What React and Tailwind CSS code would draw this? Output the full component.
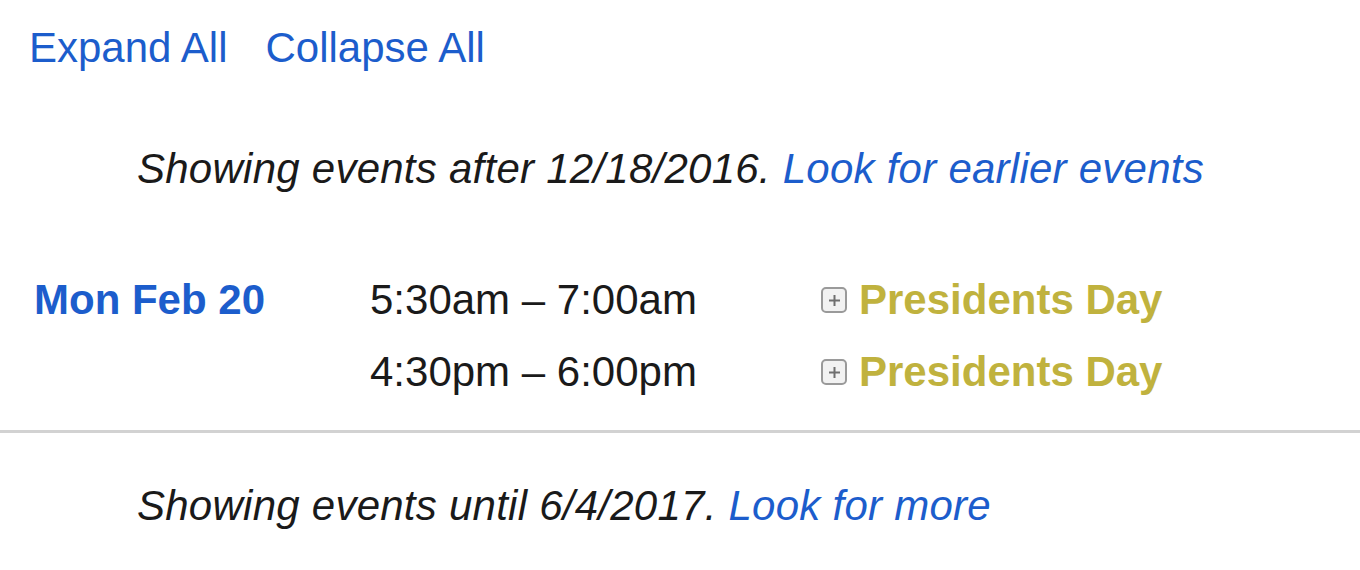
export default function App() {
  const events = [
    { time: '5:30am – 7:00am', title: 'Presidents Day' },
    { time: '4:30pm – 6:00pm', title: 'Presidents Day' },
  ];

  return (
    <div className="w-[1360px] h-[570px] bg-white overflow-hidden text-[42px] leading-[48px] text-[#1a1a1a]" style={{ fontFamily: '"Liberation Sans", Arial, sans-serif' }}>
      <div className="pl-[29px] pt-[24px] flex gap-[38px] text-[#1c5dcc]">
        <a href="#">Expand All</a>
        <a href="#">Collapse All</a>
      </div>

      <div className="pl-[137px] pt-[73px] italic tracking-[0.25px]">
        Showing events after 12/18/2016. <a href="#" className="text-[#1c5dcc]">Look for earlier events</a>
      </div>

      <div className="pt-[83px] flex">
        <div className="pl-[34px] w-[370px] font-bold text-[#1c5dcc]">Mon Feb 20</div>
        <div className="flex flex-col gap-[24px]">
          {events.map((ev, i) => (
            <div key={i} className="flex">
              <div className="w-[451px]">{ev.time}</div>
              <div className="flex items-center gap-[12px]">
                <span className="w-[26px] h-[26px] rounded-[5px] border-2 border-[#9a9a9a] bg-[#f2f2f2] flex items-center justify-center">
                  <svg width="15" height="15" viewBox="0 0 15 15">
                    <path d="M7.5 2v11M2 7.5h11" stroke="#6f6f6f" strokeWidth="2" />
                  </svg>
                </span>
                <span className="font-bold text-[#c0b23e]">{ev.title}</span>
              </div>
            </div>
          ))}
        </div>
      </div>

      <div className="mt-[34px] h-[3px] bg-[#d2d2d2]" />

      <div className="pl-[137px] pt-[49px] italic tracking-[0.25px]">
        Showing events until 6/4/2017. <a href="#" className="text-[#1c5dcc]">Look for more</a>
      </div>
    </div>
  );
}
